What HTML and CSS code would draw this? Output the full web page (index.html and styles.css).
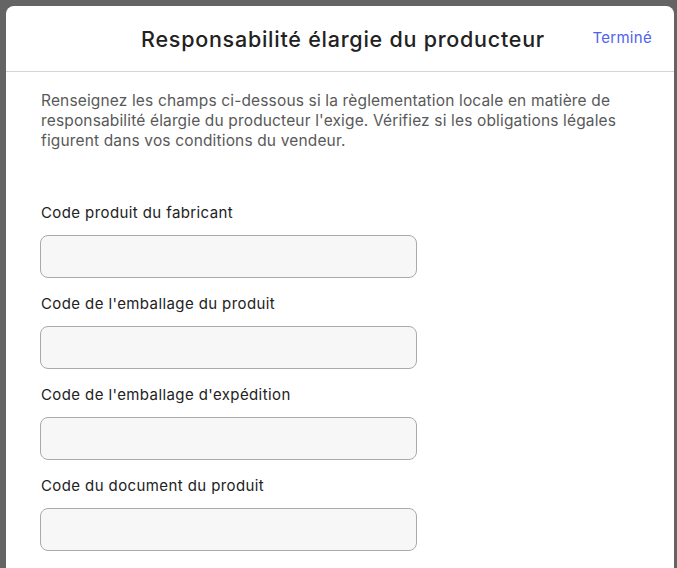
FILE: index.html
```html
<!DOCTYPE html>
<html lang="fr">
<head>
<meta charset="utf-8">
<title>Responsabilité élargie du producteur</title>
<link rel="stylesheet" href="styles.css">
</head>
<body>
<div class="modal">
  <header class="modal-header">
    <h1 class="title">Responsabilité élargie du producteur</h1>
    <a class="done" href="#">Terminé</a>
  </header>
  <div class="modal-body">
    <p class="intro">Renseignez les champs ci-dessous si la règlementation locale en matière de responsabilité élargie du producteur l'exige. Vérifiez si les obligations légales figurent dans vos conditions du vendeur.</p>
    <div class="fields">
      <label class="field">
        <span class="label">Code produit du fabricant</span>
        <input class="input" type="text">
      </label>
      <label class="field">
        <span class="label">Code de l'emballage du produit</span>
        <input class="input" type="text">
      </label>
      <label class="field">
        <span class="label">Code de l'emballage d'expédition</span>
        <input class="input" type="text">
      </label>
      <label class="field">
        <span class="label">Code du document du produit</span>
        <input class="input" type="text">
      </label>
    </div>
  </div>
</div>
</body>
</html>
```
FILE: styles.css
```css
html, body {
  margin: 0;
  padding: 0;
  height: 100%;
  overflow: hidden;
}
body {
  background: #646464;
  font-family: Inter, "Liberation Sans", sans-serif;
  padding: 6px 3px 0 6px;
  box-sizing: border-box;
}
.modal {
  background: #ffffff;
  border-radius: 8px 8px 0 0;
  height: 600px;
}
.modal-header {
  height: 65px;
  border-bottom: 1px solid #d4d4d4;
  display: flex;
  align-items: center;
  justify-content: center;
  position: relative;
}
.title {
  margin: 0 0 0 6px;
  font-size: 21.5px;
  font-weight: 500;
  color: #222222;
  letter-spacing: 0.75px;
}
.done {
  position: absolute;
  right: 22px;
  top: 22px;
  font-size: 15px;
  letter-spacing: 0.3px;
  color: #4d63ef;
  text-decoration: none;
}
.modal-body {
  padding: 19px 35px 0 35px;
}
.intro {
  margin: 0;
  font-size: 15.5px;
  line-height: 20px;
  letter-spacing: 0.15px;
  color: #595959;
  max-width: 600px;
}
.fields {
  margin-top: 52px;
  display: flex;
  flex-direction: column;
  gap: 16px;
}
.field {
  display: flex;
  flex-direction: column;
  gap: 12px;
}
.label {
  font-size: 15px;
  line-height: 20px;
  letter-spacing: 0.4px;
  color: #222222;
}
.input {
  box-sizing: border-box;
  width: 377px;
  height: 43px;
  margin: 0 0 0 -1px;
  border: 1.5px solid #aaaaaa;
  border-radius: 8px;
  background: #f7f7f7;
  font: inherit;
  padding: 0 12px;
}
```
